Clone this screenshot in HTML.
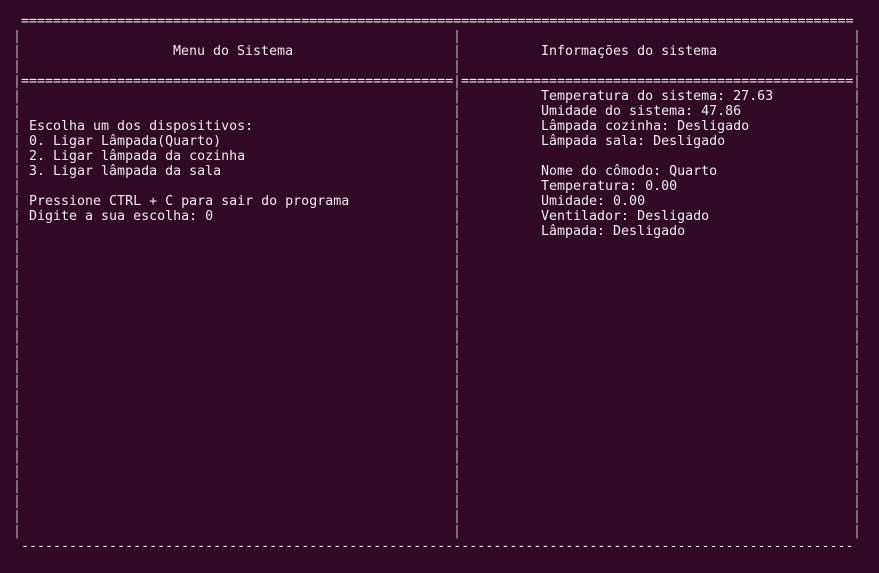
<!DOCTYPE html>
<html><head><meta charset="utf-8"><style>
html,body{margin:0;padding:0;background:#300a24;width:879px;height:573px;overflow:hidden}
pre{position:absolute;margin:0;font-family:"DejaVu Sans Mono","Liberation Mono",monospace;font-size:13.3px;line-height:15px;color:#ececec;white-space:pre}
.bar{color:#bdb2ba}
</style></head><body>
<pre style="left:21px;top:14px">========================================================================================================</pre>
<pre class="bar" style="left:13px;top:29px">|
|
|
|
|
|
|
|
|
|
|
|
|
|
|
|
|
|
|
|
|
|
|
|
|
|
|
|
|
|
|
|
|
|</pre>
<pre class="bar" style="left:453px;top:29px">|
|
|
|
|
|
|
|
|
|
|
|
|
|
|
|
|
|
|
|
|
|
|
|
|
|
|
|
|
|
|
|
|
|</pre>
<pre class="bar" style="left:853px;top:29px">|
|
|
|
|
|
|
|
|
|
|
|
|
|
|
|
|
|
|
|
|
|
|
|
|
|
|
|
|
|
|
|
|
|</pre>
<pre style="left:173px;top:44px">Menu do Sistema</pre>
<pre style="left:541px;top:44px">Informações do sistema</pre>
<pre style="left:21px;top:74px">======================================================</pre>
<pre style="left:461px;top:74px">=================================================</pre>
<pre style="left:29px;top:89px">


Escolha um dos dispositivos:
0. Ligar Lâmpada(Quarto)
2. Ligar lâmpada da cozinha
3. Ligar lâmpada da sala

Pressione CTRL + C para sair do programa
Digite a sua escolha: 0</pre>
<pre style="left:541px;top:89px">Temperatura do sistema: 27.63
Umidade do sistema: 47.86
Lâmpada cozinha: Desligado
Lâmpada sala: Desligado

Nome do cômodo: Quarto
Temperatura: 0.00
Umidade: 0.00
Ventilador: Desligado
Lâmpada: Desligado</pre>
<pre style="left:21px;top:539px">--------------------------------------------------------------------------------------------------------</pre>
</body></html>
